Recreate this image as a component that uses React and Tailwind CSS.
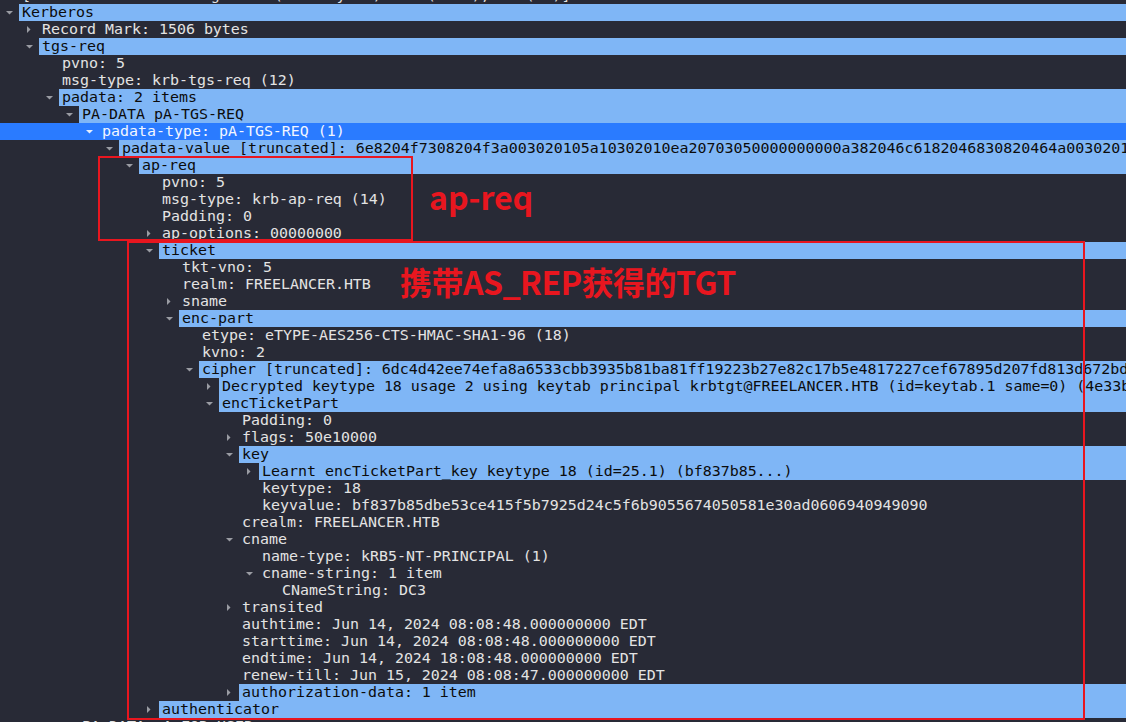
const rows = [
  [0, "[2 Reassembled TCP Segments (1510 bytes): #15(1448), #16(62)]", null, null],
  [0, "Kerberos", "d", "h"],
  [1, "Record Mark: 1506 bytes", "r", null],
  [1, "tgs-req", "d", "h"],
  [2, "pvno: 5", null, null],
  [2, "msg-type: krb-tgs-req (12)", null, null],
  [2, "padata: 2 items", "d", "h"],
  [3, "PA-DATA pA-TGS-REQ", "d", "h"],
  [4, "padata-type: pA-TGS-REQ (1)", "d", "s"],
  [5, "padata-value [truncated]: 6e8204f7308204f3a003020105a10302010ea20703050000000000a382046c6182046830820464a003020112a103020102a282045604820452", "d", "h"],
  [6, "ap-req", "d", "h"],
  [7, "pvno: 5", null, null],
  [7, "msg-type: krb-ap-req (14)", null, null],
  [7, "Padding: 0", null, null],
  [7, "ap-options: 00000000", "r", null],
  [7, "ticket", "d", "h"],
  [8, "tkt-vno: 5", null, null],
  [8, "realm: FREELANCER.HTB", null, null],
  [8, "sname", "r", null],
  [8, "enc-part", "d", "h"],
  [9, "etype: eTYPE-AES256-CTS-HMAC-SHA1-96 (18)", null, null],
  [9, "kvno: 2", null, null],
  [9, "cipher [truncated]: 6dc4d42ee74efa8a6533cbb3935b81ba81ff19223b27e82c17b5e4817227cef67895d207fd813d672bd0a1c4e5", "d", "h"],
  [10, "Decrypted keytype 18 usage 2 using keytab principal krbtgt@FREELANCER.HTB (id=keytab.1 same=0) (4e33b2c1...)", "r", "h"],
  [10, "encTicketPart", "d", "h"],
  [11, "Padding: 0", null, null],
  [11, "flags: 50e10000", "r", null],
  [11, "key", "d", "h"],
  [12, "Learnt encTicketPart_key keytype 18 (id=25.1) (bf837b85...)", "r", "h"],
  [12, "keytype: 18", null, null],
  [12, "keyvalue: bf837b85dbe53ce415f5b7925d24c5f6b9055674050581e30ad0606940949090", null, null],
  [11, "crealm: FREELANCER.HTB", null, null],
  [11, "cname", "d", null],
  [12, "name-type: kRB5-NT-PRINCIPAL (1)", null, null],
  [12, "cname-string: 1 item", "d", null],
  [13, "CNameString: DC3", null, null],
  [11, "transited", "r", null],
  [11, "authtime: Jun 14, 2024 08:08:48.000000000 EDT", null, null],
  [11, "starttime: Jun 14, 2024 08:08:48.000000000 EDT", null, null],
  [11, "endtime: Jun 14, 2024 18:08:48.000000000 EDT", null, null],
  [11, "renew-till: Jun 15, 2024 08:08:47.000000000 EDT", null, null],
  [11, "authorization-data: 1 item", "r", "h"],
  [7, "authenticator", "r", "h"],
  [3, "PA-DATA pA-FOR-USER", "r", null],
];

function Arrow({ kind, light }) {
  const fill = light ? "#e6eefc" : "#9a9ca3";
  return (
    <svg width="19" height="17" className="shrink-0">
      {kind === "d" && <polygon points="6,7 13,7 9.5,10.5" fill={fill} />}
      {kind === "r" && <polygon points="7,5 10.5,8.5 7,12" fill={fill} />}
    </svg>
  );
}

function Row({ level, text, arrow, mode }) {
  const selected = mode === "s";
  const hl = mode === "h";
  return (
    <div
      className={
        "flex h-[17px] leading-[17px] whitespace-nowrap " +
        (selected ? "bg-[#2a7bff]" : "")
      }
      style={{ paddingLeft: level * 20 }}
    >
      <Arrow kind={arrow} light={selected} />
      <div
        className={
          "flex-1 pl-[3px] " +
          (hl ? "bg-[#7fb6f6] text-[#0c0c0c]" : selected ? "text-[#f2f6ff]" : "text-[#e3e3e3]")
        }
      >
        {text}
      </div>
    </div>
  );
}

export default function App() {
  return (
    <div className="relative w-[1126px] h-[722px] overflow-hidden bg-[#282a36] font-['DejaVu_Sans_Mono',monospace] text-[14.95px]">
      <div className="-mt-[13px] flex flex-col">
        {rows.map((r, i) => (
          <Row key={i} level={r[0]} text={r[1]} arrow={r[2]} mode={r[3]} />
        ))}
      </div>

      <div className="absolute left-[98px] top-[156px] w-[315px] h-[85px] border-2 border-[#e8161f]" />
      <div className="absolute left-[127px] top-[241px] w-[958px] h-[479px] border-2 border-[#e8161f]" />

      <div className="absolute left-[429px] top-[176px] text-[32px] leading-[40px] font-bold text-[#e8161f] font-['Noto_Sans_CJK_SC',sans-serif]">
        ap-req
      </div>
      <div className="absolute left-[400px] top-[261px] text-[32px] leading-[40px] font-bold text-[#e8161f] font-['Noto_Sans_CJK_SC',sans-serif] tracking-[-0.5px]">
        携带AS_REP获得的TGT
      </div>
    </div>
  );
}
